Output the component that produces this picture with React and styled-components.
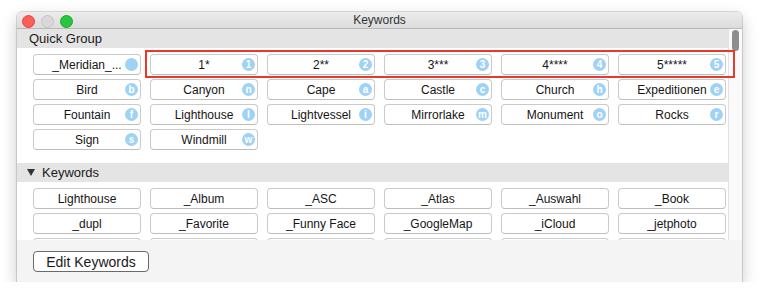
import React from 'react'
import styled, {createGlobalStyle} from "styled-components";


const Global = createGlobalStyle`
    html, body {
        margin: 0;
        background: #ffffff;
        font-family: "Liberation Sans", Arial, sans-serif;
    }
`;

const Page = styled.div`
    padding: 12px 0 0 17px;
`;

const Window = styled.div`
    position: relative;
    width: 725px;
    height: 270px;
    display: flex;
    flex-direction: column;
    background: #fff;
    border-radius: 5px 5px 0 0;
    box-shadow: 0 0 0 1px rgba(0, 0, 0, .13), 0 6px 16px rgba(0, 0, 0, .22);
    overflow: hidden;
`;

const TitleBar = styled.div`
    position: relative;
    height: 16px;
    flex-shrink: 0;
    display: flex;
    align-items: center;
    justify-content: center;
    background: linear-gradient(to bottom, #ececec, #dcdcdc);
    border-bottom: 1px solid #b9b9b9;
    font-size: 12px;
    color: #333;
`;

const Lights = styled.div`
    position: absolute;
    left: 5px;
    top: 3px;
    display: flex;
    gap: 6px;
`;

const Light = styled.span`
    width: 11px;
    height: 11px;
    border-radius: 50%;
    background: ${p => p.$color};
    border: 1px solid ${p => p.$edge};
`;

const Body = styled.div`
    flex: 1;
    display: flex;
    min-height: 0;
`;

const Scroller = styled.div`
    flex: 1;
    overflow: hidden;
`;

const Track = styled.div`
    width: 14px;
    flex-shrink: 0;
    border-left: 1px solid #e2e2e2;
    background: #fafafa;
    padding: 1px 0 0 3px;
    box-sizing: border-box;
`;

const Thumb = styled.div`
    width: 7px;
    height: 21px;
    border-radius: 4px;
    background: #8e8e8e;
`;

const SectionHead = styled.div`
    height: 19px;
    display: flex;
    align-items: center;
    gap: 7px;
    padding-left: ${p => p.$indent}px;
    background: #e4e4e4;
    font-size: 13px;
    color: #1a1a1a;
`;

const Triangle = styled.span`
    width: 0;
    height: 0;
    border-left: 4px solid transparent;
    border-right: 4px solid transparent;
    border-top: 7px solid #333;
`;

const Grid = styled.div`
    display: grid;
    grid-template-columns: repeat(6, 108px);
    column-gap: 9px;
    row-gap: 4px;
    padding: 6px 0 ${p => p.$bottom}px 16px;
`;

const Key = styled.div`
    position: relative;
    height: 21px;
    box-sizing: border-box;
    display: flex;
    align-items: center;
    justify-content: center;
    background: #fff;
    border: 1px solid #cacaca;
    border-bottom-color: #bdbdbd;
    border-radius: 4px;
    font-size: 12px;
    color: #151515;
    white-space: nowrap;
`;

const Badge = styled.span`
    position: absolute;
    right: 2px;
    top: 3px;
    width: 13px;
    height: 13px;
    border-radius: 50%;
    background: #9fd2f7;
    color: #fff;
    font-size: 10px;
    font-weight: bold;
    line-height: 13px;
    text-align: center;
`;

const BottomBar = styled.div`
    height: 42px;
    flex-shrink: 0;
    background: #f4f4f4;
    display: flex;
    align-items: center;
    padding: 1px 0 0 16px;
    box-sizing: border-box;
`;

const Button = styled.button`
    width: 116px;
    height: 21px;
    border: 1px solid #6a6a6a;
    border-radius: 4px;
    background: #fff;
    font-family: "Liberation Sans", Arial, sans-serif;
    font-size: 14px;
    color: #1a1a1a;
    padding: 0;
`;

const Highlight = styled.div`
    position: absolute;
    left: 128px;
    top: 38px;
    width: 590px;
    height: 28px;
    box-sizing: border-box;
    border: 2px solid #e8392c;
    pointer-events: none;
`;

const quick = [
    ['_Meridian_...', ''], ['1*', '1'], ['2**', '2'], ['3***', '3'], ['4****', '4'], ['5*****', '5'],
    ['Bird', 'b'], ['Canyon', 'n'], ['Cape', 'a'], ['Castle', 'c'], ['Church', 'h'], ['Expeditionen', 'e'],
    ['Fountain', 'f'], ['Lighthouse', 'l'], ['Lightvessel', 'i'], ['Mirrorlake', 'm'], ['Monument', 'o'], ['Rocks', 'r'],
    ['Sign', 's'], ['Windmill', 'w'],
];

const keywords = [
    'Lighthouse', '_Album', '_ASC', '_Atlas', '_Auswahl', '_Book',
    '_dupl', '_Favorite', '_Funny Face', '_GoogleMap', '_iCloud', '_jetphoto',
    '', '', '', '', '', '',
];

const App = () => {
    return <Page>
        <Global/>
        <Window>
            <TitleBar>
                <Lights>
                    <Light $color="#fc5f57" $edge="#e2463f"/>
                    <Light $color="#d9d9d9" $edge="#c4c4c4"/>
                    <Light $color="#28c73f" $edge="#1ba82d"/>
                </Lights>
                Keywords
            </TitleBar>
            <Body>
                <Scroller>
                    <SectionHead $indent={12}>Quick Group</SectionHead>
                    <Grid $bottom={13}>
                        {quick.map(([label, key]) => <Key key={label}>
                            {label}
                            <Badge>{key}</Badge>
                        </Key>)}
                    </Grid>
                    <SectionHead $indent={10}><Triangle/>Keywords</SectionHead>
                    <Grid $bottom={6}>
                        {keywords.map((label, i) => <Key key={i}>{label}</Key>)}
                    </Grid>
                </Scroller>
                <Track><Thumb/></Track>
            </Body>
            <BottomBar>
                <Button>Edit Keywords</Button>
            </BottomBar>
            <Highlight/>
        </Window>
    </Page>
};

export default App;
